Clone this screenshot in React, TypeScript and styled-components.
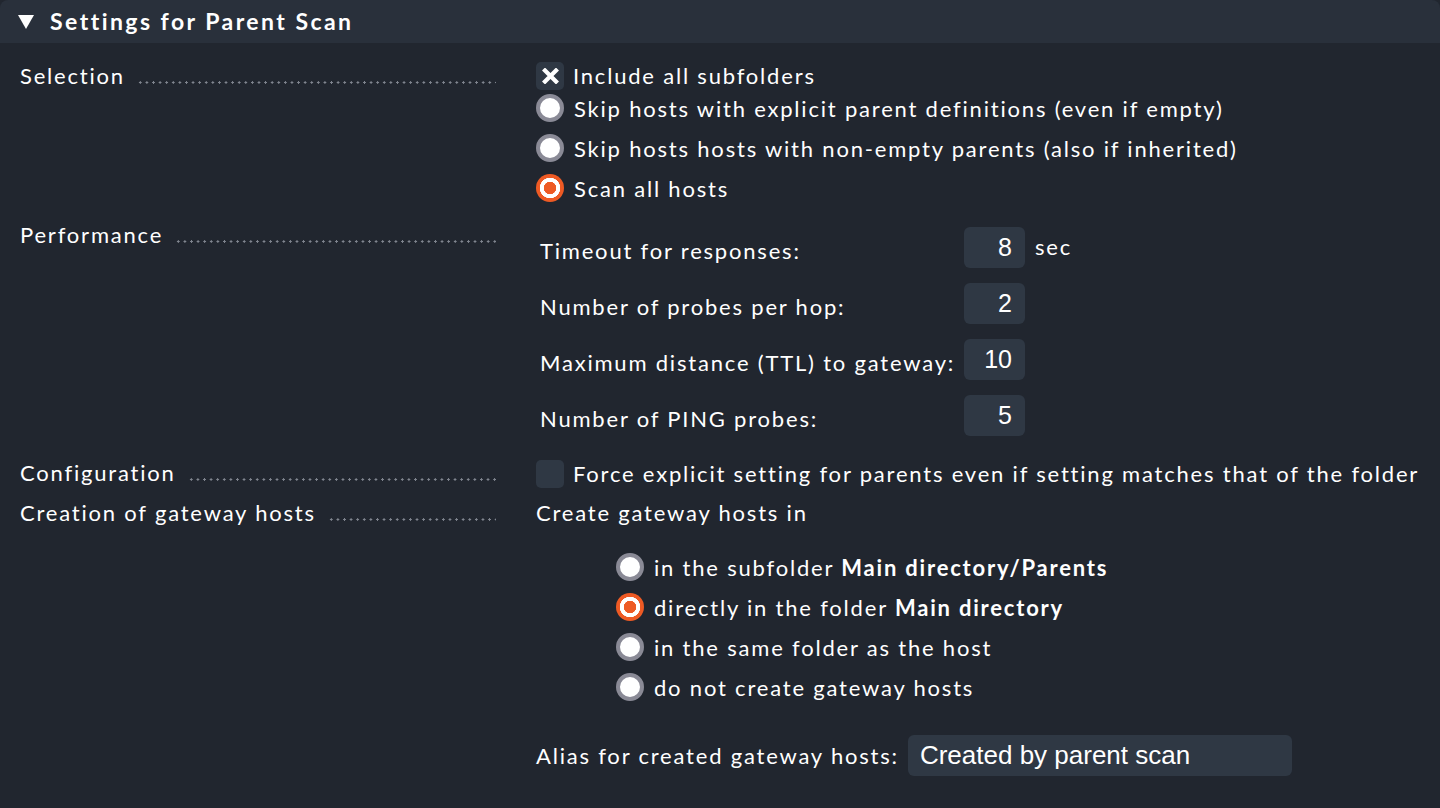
import React from "react";
import styled, { createGlobalStyle, css } from "styled-components";

const GlobalStyle = createGlobalStyle`
  html, body {
    margin: 0;
    padding: 0;
    background: #21262f;
  }
  body {
    font-family: Lato, "Noto Sans", sans-serif;
    color: #ffffff;
    width: 1440px;
    height: 808px;
    overflow: hidden;
  }
`;

// shared text look of the form
const formText = css`
  font-size: 22px;
  letter-spacing: 1.8px;
  white-space: nowrap;
`;

const Panel = styled.section`
  width: 1440px;
  height: 808px;
  background: #21262f;
`;

const Header = styled.div`
  height: 43px;
  background: #29303b;
  border-radius: 8px 8px 0 0;
  display: flex;
  align-items: center;
  padding-left: 18px;
  gap: 16px;
  box-sizing: border-box;
`;

const Title = styled.h2`
  margin: 0;
  font-size: 23px;
  font-weight: 700;
  letter-spacing: 2.45px;
  line-height: 26px;
  padding-bottom: 2px;
`;

const Body = styled.div`
  padding: 20px 0 0 20px;
  display: flex;
  flex-direction: column;
`;

const Row = styled.div<{ $after?: number }>`
  display: grid;
  grid-template-columns: 476px 1fr;
  column-gap: 40px;
  margin-bottom: ${(p) => p.$after ?? 13}px;
`;

const Label = styled.div`
  ${formText};
  display: flex;
  align-items: flex-end;
  height: 26px;
  line-height: 26px;
`;

const Dots = styled.span`
  flex: 1;
  height: 3px;
  margin: 0 0 5px 12px;
  background-image: radial-gradient(circle, #80858f 1px, transparent 1.3px);
  background-size: 6.6px 3px;
  background-repeat: repeat-x;
`;

const Stack = styled.div<{ $top?: number }>`
  display: flex;
  flex-direction: column;
  margin-top: ${(p) => p.$top ?? 0}px;
`;

const OptionLine = styled.div<{ $h: number; $indent?: number }>`
  ${formText};
  display: flex;
  align-items: center;
  height: ${(p) => p.$h}px;
  padding-left: ${(p) => p.$indent ?? 0}px;
  b {
    font-weight: 700;
  }
`;

const CheckBox = styled.span`
  width: 28px;
  height: 28px;
  margin-right: 9px;
  border-radius: 5px;
  background: #2f3844;
  display: flex;
  align-items: center;
  justify-content: center;
  flex-shrink: 0;
`;

const Radio = styled.span<{ $on?: boolean }>`
  width: 28px;
  height: 28px;
  margin-right: 10px;
  border-radius: 50%;
  box-sizing: border-box;
  flex-shrink: 0;
  ${(p) =>
    p.$on
      ? css`
          background: radial-gradient(
            circle,
            #ee5a24 0 6px,
            #ffffff 6.5px 10px,
            #ee5a24 10.5px
          );
        `
      : css`
          background: #ffffff;
          border: 4.5px solid #8a8a96;
        `}
`;

const ParamTable = styled.div`
  display: grid;
  grid-template-columns: 424px auto auto;
  grid-auto-rows: 41px;
  row-gap: 15px;
  margin-top: 5px;
  margin-bottom: 10px;
  align-items: center;
  justify-content: start;
`;

const ParamLabel = styled.span`
  ${formText};
  padding-left: 4px;
  padding-top: 5px;
`;

const NumberBox = styled.span`
  width: 61px;
  height: 41px;
  margin-left: 4px;
  box-sizing: border-box;
  border-radius: 6px;
  background: #2f3844;
  display: flex;
  align-items: center;
  justify-content: flex-end;
  padding: 0 13px 1px 0;
  font-family: "Liberation Sans", Arial, sans-serif;
  font-size: 25px;
`;

const Unit = styled.span`
  ${formText};
  margin-left: 10px;
  padding-bottom: 2px;
`;

const PlainText = styled.div`
  ${formText};
  line-height: 26px;
`;

const AliasLine = styled.div`
  ${formText};
  display: flex;
  align-items: center;
  gap: 9px;
  margin-top: 28px;
`;

const TextBox = styled.span`
  width: 384px;
  height: 41px;
  box-sizing: border-box;
  border-radius: 6px;
  background: #2f3844;
  display: flex;
  align-items: center;
  padding: 0 12px 1px;
  font-family: "Liberation Sans", Arial, sans-serif;
  font-size: 26px;
  letter-spacing: 0;
`;

const Caret = () => (
  <svg width="16" height="14" viewBox="0 0 16 14">
    <polygon points="0,0 16,0 8,14" fill="#ffffff" />
  </svg>
);

const Cross = () => (
  <svg width="17" height="16" viewBox="0 0 17 16">
    <path d="M3 2.5 L14 13.5 M14 2.5 L3 13.5" stroke="#ffffff" strokeWidth="4.2" strokeLinecap="square" />
  </svg>
);

const params = [
  { label: "Timeout for responses:", value: "8", unit: "sec" },
  { label: "Number of probes per hop:", value: "2" },
  { label: "Maximum distance (TTL) to gateway:", value: "10" },
  { label: "Number of PING probes:", value: "5" },
];

const gatewayOptions: { text: string; bold?: string; on?: boolean }[] = [
  { text: "in the subfolder ", bold: "Main directory/Parents" },
  { text: "directly in the folder ", bold: "Main directory", on: true },
  { text: "in the same folder as the host" },
  { text: "do not create gateway hosts" },
];

export default function App() {
  return (
    <>
      <GlobalStyle />
      <Panel>
        <Header>
          <Caret />
          <Title>Settings for Parent Scan</Title>
        </Header>
        <Body>
          <Row $after={14}>
            <Label>
              Selection
              <Dots />
            </Label>
            <Stack>
              <OptionLine $h={25}>
                <CheckBox>
                  <Cross />
                </CheckBox>
                <span>Include all subfolders</span>
              </OptionLine>
              <OptionLine $h={40}>
                <Radio />
                <span>Skip hosts with explicit parent definitions (even if empty)</span>
              </OptionLine>
              <OptionLine $h={40}>
                <Radio />
                <span>Skip hosts hosts with non-empty parents (also if inherited)</span>
              </OptionLine>
              <OptionLine $h={40}>
                <Radio $on />
                <span>Scan all hosts</span>
              </OptionLine>
            </Stack>
          </Row>
          <Row $after={14}>
            <Label>
              Performance
              <Dots />
            </Label>
            <ParamTable>
              {params.map((p) => (
                <React.Fragment key={p.label}>
                  <ParamLabel>{p.label}</ParamLabel>
                  <NumberBox>{p.value}</NumberBox>
                  {p.unit ? <Unit>{p.unit}</Unit> : <span />}
                </React.Fragment>
              ))}
            </ParamTable>
          </Row>
          <Row $after={13}>
            <Label>
              Configuration
              <Dots />
            </Label>
            <OptionLine $h={27}>
              <CheckBox />
              <span>Force explicit setting for parents even if setting matches that of the folder</span>
            </OptionLine>
          </Row>
          <Row>
            <Label>
              Creation of gateway hosts
              <Dots />
            </Label>
            <Stack>
              <PlainText>Create gateway hosts in</PlainText>
              <Stack $top={21}>
                {gatewayOptions.map((o) => (
                  <OptionLine key={o.text} $h={40} $indent={80}>
                    <Radio $on={o.on} />
                    <span>
                      {o.text}
                      {o.bold && <b>{o.bold}</b>}
                    </span>
                  </OptionLine>
                ))}
              </Stack>
              <AliasLine>
                <span>Alias for created gateway hosts:</span>
                <TextBox>Created by parent scan</TextBox>
              </AliasLine>
            </Stack>
          </Row>
        </Body>
      </Panel>
    </>
  );
}
